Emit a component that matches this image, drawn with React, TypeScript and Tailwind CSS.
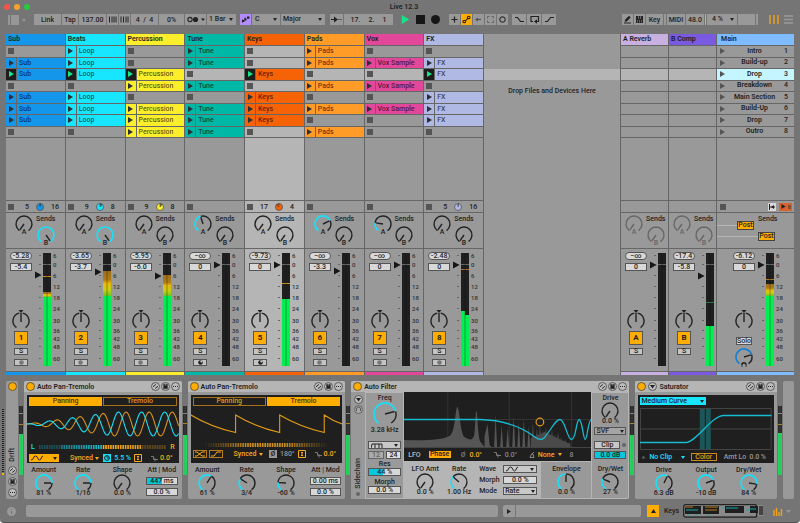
import React from "react";

type Clip = string | null;
type Track = {
  name: string;
  color: string;
  clips: Clip[];
  playing?: boolean;
  selected?: boolean;
  status?: [string, number, string];
  sendA: number;
  sendB: number;
  peak: string;
  vol: string;
  fader: number;
  meter: Level;
  midi?: boolean;
};
type Level = { green?: [number, number]; hot?: [number, number]; peak?: [number, string] };

const INK = "#1f1f1f";
const CYAN = "#18e0f8";

const fill = (name: string, mask: string): Clip[] => mask.split("").map((c) => (c === "x" ? name : null));

const tracks: Track[] = [
  { name: "Sub", color: "#1496ea", clips: fill("Sub", ".xx.xxx."), playing: true, status: ["5", 0.02, "16"], sendA: 0, sendB: 1, peak: "-5.28", vol: "-5.4", fader: 275, meter: { green: [297, 297], hot: [292, 297], peak: [276, "#c8871a"] } },
  { name: "Beats", color: "#18e6ff", clips: fill("Loop", "xxx.xxx."), playing: true, status: ["9", 0.12, "8"], sendA: 0, sendB: 1, peak: "-3.65", vol: "-3.7", fader: 272, meter: { green: [296, 296], hot: [271, 296] } },
  { name: "Percussion", color: "#fdee2c", clips: fill("Percussion", "..xx.xxx"), playing: true, status: ["9", 0.12, "8"], sendA: 0, sendB: 0, peak: "-5.95", vol: "-6.0", fader: 276, meter: { green: [296, 296], hot: [275, 296] } },
  { name: "Tune", color: "#00b8a6", clips: fill("Tune", "xx.x.xxx"), sendA: 0.44, sendB: 0, peak: "−∞", vol: "0", fader: 265, meter: {}, midi: true },
  { name: "Keys", color: "#f66206", clips: fill("Keys", "..x.xxx."), playing: true, selected: true, status: ["17", 0.85, "4"], sendA: 0, sendB: 0, peak: "-9.73", vol: "0", fader: 265, meter: { green: [299, 299], peak: [283, "#c8961a"] }, midi: true },
  { name: "Pads", color: "#ff9c28", clips: fill("Pads", "xx.x.x.x"), sendA: 0.72, sendB: 0, peak: "−∞", vol: "-3.3", fader: 271, meter: {} },
  { name: "Vox", color: "#e2479a", clips: fill("Vox Sample", ".x.x.x.."), sendA: 0.22, sendB: 0, peak: "−∞", vol: "0", fader: 265, meter: {} },
  { name: "FX", color: "#b0b9e4", clips: fill("FX", ".xx.xxx."), playing: true, status: ["5", 0.02, "16"], sendA: 0, sendB: 0, peak: "-2.48", vol: "0", fader: 265, meter: { green: [311, 315], peak: [269, "#b06a20"] } },
];

// Which tracks' clip in the "Drop" scene is currently sounding.
const scenes = ["Intro", "Build-up", "Drop", "Breakdown", "Main Section", "Build-Up", "Drop", "Outro"];
const LIVE_SCENE = 2;
const scale: [string, number][] = [["6", 256], ["0", 265], ["6", 276], ["12", 287], ["18", 298], ["24", 309], ["30", 321], ["36", 331], ["42", 339], ["48", 347], ["60", 359]];

const point = (cx: number, cy: number, r: number, deg: number): [number, number] => [
  cx + r * Math.sin((deg * Math.PI) / 180),
  cy - r * Math.cos((deg * Math.PI) / 180),
];
const arc = (c: number, r: number, a: number, b: number) => {
  const [x1, y1] = point(c, c, r, a);
  const [x2, y2] = point(c, c, r, b);
  return `M${x1} ${y1}A${r} ${r} 0 ${b - a > 180 ? 1 : 0} 1 ${x2} ${y2}`;
};

function Knob({ label, value = 0, color = CYAN, ink = "#222", size = 18, letter, head }: { label: string; value?: number; color?: string; ink?: string; size?: number; letter?: string; head?: boolean }) {
  const c = size / 2;
  const r = c - 1;
  const deg = -145 + 290 * value;
  const [x, y] = point(c, c, r * 0.9, deg);
  return (
    <span className="relative block shrink-0">
      <svg width={size} height={size} className="overflow-visible" fill="none" stroke={ink} strokeWidth="1.4">
        <path d={arc(c, r, deg, 145.1)} />
        {value > 0 && <path d={arc(c, r, -145, deg)} stroke={color} strokeWidth="1.7" />}
        <path d={`M${c} ${c}L${x} ${y}`} />
        {letter && (
          <text x={c} y={size + 1} textAnchor="middle" fontSize="7" fill={ink} stroke="none">
            {letter}
          </text>
        )}
        {head && <path d={`M${c - 2.2} ${size - 1}a2.200 2.200 0 1 1 4.400 0M${c - 2.5} ${size}h1M${c + 1.5} ${size}h1`} />}
      </svg>
      <input type="range" aria-label={label} min="0" max="1" step="any" defaultValue={value} className="absolute inset-0 h-full w-full opacity-0" />
    </span>
  );
}

function Pan({ label }: { label: string }) {
  return (
    <span className="relative block">
      <svg width="18" height="21" fill="none" stroke="#222" strokeWidth="1.4">
        <path d="M6.500 0h5L9 3z" fill="#222" stroke="none" />
        <path d={arc(9, 8, -145, -12)} transform="translate(0 2)" />
        <path d={arc(9, 8, 12, 145)} transform="translate(0 2)" />
        <path d="M9 3v9" />
      </svg>
      <input type="range" aria-label={label} className="absolute inset-0 h-full w-full opacity-0" />
    </span>
  );
}

function Meter({ id, level, fader, labels }: { id: string; level: Level; fader: number; labels?: boolean }) {
  const gid = `hot-${id}`;
  const w = labels ? 27 : 17;
  return (
    <span className="relative block shrink-0">
      <svg width={w} height="115" viewBox={`0 252 ${w} 115`} fontSize="6" fill="#333">
        <defs>
          <linearGradient id={gid} x1="0" x2="0" y1="0" y2="1">
            <stop offset="0" stopColor="#9c6e1c" />
            <stop offset="0.35" stopColor="#b07d14" />
            <stop offset="0.5" stopColor="#e8b80c" />
            <stop offset="0.75" stopColor="#c9cf10" />
            <stop offset="1" stopColor="#6cc324" />
          </linearGradient>
        </defs>
        {scale.map(([t, y], i) => (
          <g key={i}>
            <path d={`M4 ${y - 0.5}h2`} stroke="#666" />
            {labels && <text x="18" y={y + 2}>{t}</text>}
          </g>
        ))}
        <rect x="8" y="253" width="8" height="113" fill="#1f1f1f" />
        {level.hot && <rect x="8" y={level.hot[0]} width="8" height={level.hot[1] - level.hot[0]} fill={`url(#${gid})`} />}
        {level.green && (
          <>
            <rect x="8" y={level.green[0]} width="4" height={366 - level.green[0]} fill="#00ee50" />
            <rect x="12" y={level.green[1]} width="4" height={366 - level.green[1]} fill="#00ee50" />
          </>
        )}
        {level.peak && <rect x="8" y={level.peak[0]} width="8" height="1" fill={level.peak[1]} />}
        <path d="M8 264.500h8" stroke="#666" />
        <path d="M12 253v113" stroke="#111" strokeOpacity="0.35" />
        <path d={`M0 ${fader - 3.5}l6.500 3.500l-6.500 3.500z`} fill="#161616" />
      </svg>
      <input type="range" aria-label="Volume" className="absolute inset-0 h-full w-full opacity-0" />
    </span>
  );
}

function Mixer({ t, kind = "track", id }: { t: { peak: string; vol: string; fader: number; meter: Level; midi?: boolean; selected?: boolean }; kind?: "track" | "return" | "main"; id: string }) {
  return (
    <div className={`flex h-[122px] gap-[3px] pt-[3px] ${kind === "main" ? "pl-4" : "pl-1"} ${t.selected ? "bg-[#b5b5b5]" : "bg-[#999]"}`}>
      <div className="flex w-[22px] flex-col items-center">
        <button className="h-2 w-[22px] rounded-full border border-[#555] bg-[#d8d8d8] leading-[6px]">{t.peak}</button>
        <input aria-label={`Volume ${id}`} defaultValue={t.vol} className="mt-[3px] h-2 w-[22px] border border-[#555] bg-[#d8d8d8] text-center" />
        <div className="mt-auto" />
        <Pan label={`Pan ${id}`} />
        {kind === "main" ? (
          <>
            <button className="mt-[6px] h-2 w-4 border border-[#555] bg-[#d8d8d8] leading-[6px]">Solo</button>
            <div className="mt-[3px] mb-[5px]">
              <Knob label="Cue volume" value={0.75} color="#1a7fd0" head />
            </div>
          </>
        ) : (
          <>
            <button className="h-[14px] w-[14px] border border-[#555] bg-[#ffad00] text-[8px] leading-[12px] font-bold">{id}</button>
            <button className="mt-[3px] h-[7px] w-[14px] border border-[#555] bg-[#c4c4c4] leading-[5px]">S</button>
            {kind === "track" ? (
              <button aria-label="Arm" className="mt-1 mb-[5px] flex h-[7px] w-[14px] items-center justify-center border border-[#555] bg-[#c4c4c4]">
                <svg width="5" height="5"><circle cx="2.500" cy="2.500" r="2.300" fill={t.midi ? "#222" : "#777"} />{t.midi && <circle cx="3.300" cy="1.600" r="1" fill="#ccc" />}</svg>
              </button>
            ) : (
              <div className="h-4 shrink-0" />
            )}
          </>
        )}
      </div>
      <Meter id={id} level={t.meter} fader={t.fader} labels={kind !== "return"} />
    </div>
  );
}

function Sends({ a, b, ink, selected, pad = "pl-[9px]" }: { a: number; b: number; ink?: string; selected?: boolean; pad?: string }) {
  return (
    <div className={`flex h-[35px] gap-[3px] ${pad} ${selected ? "bg-[#b5b5b5]" : "bg-[#999]"}`}>
      <div className="pt-[2px]"><Knob label="Send A" value={a} ink={ink} letter="A" /></div>
      <div className="flex flex-col items-center pt-[2px]">
        <span>Sends</span>
        <div className="mt-[3px]"><Knob label="Send B" value={b} ink={ink} letter="B" /></div>
      </div>
    </div>
  );
}

const Tri = ({ color = "#222", w = 5, h = 6 }: { color?: string; w?: number; h?: number }) => (
  <svg width={w} height={h} viewBox="0 0 5 6" className="shrink-0"><path d="M0 0l5 3l-5 3z" fill={color} /></svg>
);
const Down = ({ color = "#222" }: { color?: string }) => (
  <svg width="4" height="3" className="shrink-0"><path d="M0 0h4l-2 3z" fill={color} /></svg>
);

function TrackColumn({ t, n }: { t: Track; n: number }) {
  const bg = t.selected ? "bg-[#b5b5b5]" : "bg-[#999]";
  return (
    <section className="flex min-w-0 flex-col gap-px">
      <h2 className="h-[11px] pl-[2px] leading-[11px] font-semibold" style={{ background: t.color }}>{t.name}</h2>
      <div className="grid h-[91px] grid-rows-8 gap-px">
        {t.clips.map((c, i) => {
          const live = t.playing && i === LIVE_SCENE;
          return c ? (
            <div key={i} className="flex min-h-0 gap-px">
              <button aria-label={`Launch ${c}`} className="flex w-[10px] items-center justify-center" style={{ background: live ? "#1c1c1c" : t.color }}>
                <Tri color={live ? "#1be58b" : "#2b3036"} />
              </button>
              <span className="flex-1 truncate pl-[2px] leading-[11px] text-black/65" style={{ background: t.color }}>{c}</span>
            </div>
          ) : (
            <div key={i} className={`flex min-h-0 items-center pl-[2px] ${i === LIVE_SCENE ? "bg-[#b5b5b5]" : bg}`}>
              <button aria-label="Stop" className="size-[6px] bg-[#555]" />
            </div>
          );
        })}
      </div>
      <div className={`min-h-4 flex-1 ${bg}`} />
      <div className={`flex h-[11px] items-center pl-[2px] ${bg}`}>
        <button aria-label="Stop track" className="size-[6px] bg-[#555]" />
        {t.status && (
          <>
            <span className="w-[15px] text-right">{t.status[0]}</span>
            <svg width="8" height="8" className="mx-[7px]">
              <circle cx="4" cy="4" r="3.500" fill={t.color} stroke="#555" strokeWidth="0.800" />
              <path d={`M4 4V.8A3.200 3.200 0 0 1 ${point(4, 4, 3.2, t.status[1] * 360).join(" ")}z`} fill="#333" fillOpacity={t.status[1] > 0.5 ? 0 : 0.5} stroke="#333" strokeWidth="0.500" />
            </svg>
            <span>{t.status[2]}</span>
          </>
        )}
      </div>
      <Sends a={t.sendA} b={t.sendB} selected={t.selected} />
      <Mixer t={t} id={String(n)} />
      <div className="h-[3px]" style={{ background: t.color }} />
    </section>
  );
}

function ReturnColumn({ name, id, color, t }: { name: string; id: string; color: string; t: { peak: string; vol: string; fader: number; meter: Level } }) {
  return (
    <section className="flex min-w-0 flex-col gap-px">
      <h2 className="h-[11px] pl-[2px] leading-[11px] font-semibold" style={{ background: color }}>{name}</h2>
      <div className="grid h-[91px] grid-rows-8 gap-px">
        {scenes.map((_, i) => <div key={i} className={i === LIVE_SCENE ? "bg-[#b5b5b5]" : "bg-[#999]"} />)}
      </div>
      <div className="min-h-4 flex-1 bg-[#999]" />
      <div className="h-[11px] bg-[#999]" />
      <Sends a={0} b={0} ink="#666" pad="pl-1" />
      <Mixer t={t} id={id} kind="return" />
      <div className="h-[3px]" style={{ background: color }} />
    </section>
  );
}

function MainColumn() {
  return (
    <section className="flex min-w-0 flex-col gap-px">
      <h2 className="h-[11px] bg-[#7ebcff] pl-1 leading-[11px] font-semibold">Main</h2>
      <div className="grid h-[91px] grid-rows-8 gap-px">
        {scenes.map((s, i) => (
          <button key={i} className={`flex min-h-0 items-center pr-[6px] pl-[3px] leading-[11px] ${i === LIVE_SCENE ? "bg-[#c5f6ff]" : "bg-[#999]"}`}>
            <Tri color="#555" />
            <span className="flex-1 text-center font-semibold">{s}</span>
            <span className="w-1 text-right">{i + 1}</span>
          </button>
        ))}
      </div>
      <div className="min-h-4 flex-1 bg-[#999]" />
      <div className="flex h-[11px] items-center bg-[#999] pr-[2px] pl-[3px]">
        <button aria-label="Stop all clips" className="size-[6px] bg-[#555]" />
        <button aria-label="Follow" className="ml-auto flex h-2 w-2 items-center justify-center bg-[#d8d8d8]"><svg width="6" height="6" stroke="#222" fill="#222"><path d="M.5 0v6M1 3h5" fill="none" /><path d="M2 3l3-2v4z" stroke="none" /></svg></button>
        <button aria-label="Back to arrangement" className="ml-[3px] flex h-2 w-[13px] items-center justify-center gap-[2px] bg-[#d9622f]"><Tri w={5} h={5} /><span className="h-1 w-[3px] bg-[#8d4a2d]" /></button>
      </div>
      <div className="flex h-[35px] flex-col gap-[2px] bg-[#999] pt-[2px]">
        <div className="flex items-start">
          <span className="mt-[10px] h-px w-5 bg-[#b5b5b5]" />
          <button className="mt-[6px] h-[9px] w-[17px] border border-[#444] bg-[#ffad00] leading-[7px]">Post</button>
          <span className="ml-1">Sends</span>
        </div>
        <div className="flex items-center">
          <span className="h-px w-[41px] bg-[#b5b5b5]" />
          <button className="h-[9px] w-[17px] border border-[#444] bg-[#ffad00] leading-[7px]">Post</button>
        </div>
      </div>
      <Mixer kind="main" id="M" t={{ peak: "-6.12", vol: "0", fader: 265, meter: { green: [296, 296], hot: [284, 296], peak: [279, "#a8781c"] } }} />
      <div className="h-[3px] bg-[#7ebcff]" />
    </section>
  );
}

function Tool({ children, w, cls = "bg-[#999]", label }: { children?: React.ReactNode; w: string; cls?: string; label?: string }) {
  return <button aria-label={label} className={`flex h-[11px] shrink-0 items-center justify-center whitespace-nowrap ${w} ${cls}`}>{children}</button>;
}
function ToolSelect({ label, value, w, pad = "pl-[2px]" }: { label: string; value: string; w: string; pad?: string }) {
  return (
    <span className={`relative flex h-[11px] shrink-0 items-center ${w}`}>
      <select aria-label={label} className={`h-full w-full appearance-none bg-[#999] leading-[11px] ${pad}`}><option>{value}</option></select>
      <span className="pointer-events-none absolute right-[3px]"><Down /></span>
    </span>
  );
}
const Icon = ({ d, w = 9, color = "#222", sw = 1.2, fillD }: { d?: string; w?: number; color?: string; sw?: number; fillD?: string }) => (
  <svg width={w} height="9" viewBox={`0 0 ${w} 9`} fill="none" stroke={color} strokeWidth={sw}>
    {d && <path d={d} />}
    {fillD && <path d={fillD} fill={color} stroke="none" />}
  </svg>
);

function Toolbar() {
  return (
    <nav className="flex h-[11px] items-center pr-[7px] pl-2">
      <svg width="18" height="10"><path d="M0 0h2v10h-2zM3 0h8v10h-8z" fill="#969696" /><path d="M14 4h4l-2 3z" fill="#969696" /></svg>
      <div className="ml-2 flex gap-px">
        <Tool w="w-[27px]">Link</Tool>
        <Tool w="w-4">Tap</Tool>
        <Tool w="w-[27px]">137.00</Tool>
        <Tool w="w-[11px]" label="Nudge down"><Icon d="M1.500 1.500v6M4 1.500v6M6 1.500v6M8 1.500v6" sw={1} /></Tool>
        <Tool w="w-[11px]" label="Nudge up"><Icon d="M1 1.500v6M3.500 1.500v6M6 1.500v6M8 1.500v6" sw={1} /></Tool>
        <Tool w="w-[27px]">4&nbsp; /&nbsp; 4</Tool>
        <Tool w="w-[25px]">0%</Tool>
        <Tool w="w-[21px]" label="Metronome"><svg width="18" height="7"><circle cx="3" cy="3.500" r="2.100" fill="none" stroke="#222" strokeWidth="1.100" /><circle cx="8.500" cy="3.500" r="2.600" fill="#222" /><path d="M14 2.500h4l-2 2.500z" fill="#222" /></svg></Tool>
        <ToolSelect label="Quantization" value="1 Bar" w="w-[29px]" />
      </div>
      <div className="ml-1 flex gap-px">
        <Tool w="w-[11px]" cls="bg-[#b38cff]" label="Scale"><Icon d="M1.500 7.500V4.500M4 5V2.500M7 2v2" sw={1} fillD="M1 5h2.500v2h-2.500zM3.500 3.500h2v2h-2zM6 1.500h2.500v2h-2.500z" /></Tool>
        <ToolSelect label="Root note" value="C" w="w-[28px]" pad="pl-[3px]" />
        <ToolSelect label="Scale name" value="Major" w="w-[44px]" />
      </div>
      <div className="ml-[5px] flex gap-px">
        <Tool w="w-[13px]" label="Follow"><Icon w={11} d="M0 4.500h4M7.500 4.500h1M9.500 4.500h1" fillD="M3 1.500l4 3l-4 3z" /></Tool>
        <Tool w="w-[49px]"><span className="flex gap-2"><span>17.</span><span>2.</span><span>1</span></span></Tool>
      </div>
      <div className="ml-2 flex items-center gap-[6px]">
        <button aria-label="Play"><Tri color="#17e38a" w={9} h={9} /></button>
        <button aria-label="Stop" className="size-[9px] bg-[#161616]" />
        <button aria-label="Record" className="size-[9px] rounded-full bg-[#161616]" />
      </div>
      <div className="ml-[9px] flex gap-px">
        <Tool w="w-[11px]" label="Overdub"><Icon d="M4.500 1.500v6M1.500 4.500h6" /></Tool>
        <Tool w="w-[11px]" cls="bg-[#ffad00]" label="Automation arm"><Icon d="M3.500 6L5.500 3.500M1 6.500a1.300 1.300 0 1 0 2.600 0a1.300 1.300 0 1 0-2.600 0M5.400 2.500a1.300 1.300 0 1 0 2.600 0a1.300 1.300 0 1 0-2.600 0" sw={1.1} /></Tool>
        <Tool w="w-[11px]" label="Re-enable automation"><Icon d="M3 4.500h4" fillD="M1 4.500l3-2v4z" color="#555" /></Tool>
        <Tool w="w-[11px]" label="Capture"><Icon d="M1.500 3.500v-2h2M5.500 1.500h2v2M7.500 5.500v2h-2M3.500 7.500h-2v-2" color="#666" sw={1} /></Tool>
        <Tool w="w-[11px]" label="Session record"><Icon d="M1.800 4.500a2.700 2.700 0 1 0 5.400 0a2.700 2.700 0 1 0-5.400 0" color="#333" /></Tool>
      </div>
      <div className="ml-1 flex gap-px">
        <Tool w="w-[14px]" label="Punch in"><Icon w={11} d="M1 2.500h2.500l3 4h3.500" /></Tool>
        <Tool w="w-[14px]" label="Loop"><Icon w={11} d="M4 6.500H2v-5h7.500v5H8" fillD="M8 4.300v4.400l-3-2.200z" /></Tool>
        <Tool w="w-[14px]" label="Punch out"><Icon w={11} d="M1 6.500h2.500l3-4h3.500" /></Tool>
      </div>
      <div className="ml-auto flex gap-px">
        <Tool w="w-[11px]" label="Draw mode"><Icon d="M1 8h7" sw={1} fillD="M1.500 7l.8-2.500L6 .8l1.700 1.700L4 6.200z" /></Tool>
        <Tool w="w-[11px]" label="Computer keyboard">
          <svg width="9" height="9"><path d="M1 1h7v7h-7z" fill="#222" /><path d="M2.500 5v2.500M4.500 5v2.500M6.500 5v2.500M3.500 1v3M5.500 1v3" stroke="#999" strokeWidth=".6" /></svg>
        </Tool>
        <Tool w="w-[17px]">Key</Tool>
        <Tool w="w-[2px]" label="Key activity" />
        <Tool w="w-[18px]">MIDI</Tool>
        <Tool w="w-[18px]">48.0</Tool>
        <span className="h-[11px] w-px bg-[#ffad00]" />
        <ToolSelect label="CPU" value="4 %" w="w-[30px]" pad="pl-[5px]" />
        <Tool w="w-[17px]" label="Overload" />
        <Tool w="w-[2px]" label="Disk" />
      </div>
      <svg width="24" height="9" className="ml-[11px]"><path d="M1 0v9M5 0v9M9 0v9" stroke="#f2a21c" strokeWidth="1.400" /><path d="M15 1h9M15 4.500h9M15 8h9" stroke="#999" strokeWidth="1.400" /></svg>
    </nav>
  );
}

const Dot = () => <span className="size-[9px] shrink-0 rounded-full border border-[#6b5a30] bg-[#ffad00]" />;
function MiniIcons({ col }: { col?: boolean }) {
  return (
    <span className={`flex ${col ? "flex-col gap-[2px]" : "ml-auto gap-px"}`}>
      {[
        <path key="a" d="M2.600 5V4L5 2.500M6.400 4v1L4 6.500" strokeWidth="0.900" />,
        <path key="b" d="M2.500 2.300h4v4.400h-4z M3.700 2.300v1.300h1.600v-1.300z" fill="#222" fillRule="evenodd" strokeWidth="0.300" />,
        <path key="c" d="M2 4.500h1M4 4.500h1M6 4.500h1" />,
      ].map((p, i) => (
        <button key={i} aria-label={["Hot-swap", "Save preset", "More"][i]}>
          <svg width="9" height="9" fill="none" stroke="#222" strokeWidth="1"><circle cx="4.500" cy="4.500" r="4" fill="#bdbdbd" stroke="#444" strokeWidth="0.800" />{p}</svg>
        </button>
      ))}
    </span>
  );
}

const Fold = () => (
  <svg width="9" height="9" className="shrink-0"><circle cx="4.500" cy="4.500" r="4" fill="#bdbdbd" stroke="#444" strokeWidth=".8" /><path d="M2 3h5l-2.500 3.500z" fill="#222" /></svg>
);

function Device({ title, children, grow, extra }: { title: string; children: React.ReactNode; grow: string; extra?: React.ReactNode }) {
  return (
    <article className={`flex min-w-0 flex-col rounded-[2px] bg-[#999] ${grow}`}>
      <header className="flex h-[11px] shrink-0 items-center gap-[2px] rounded-t-[2px] bg-[#b5b5b5] px-[2px]">
        <Dot />{extra}<h3 className="font-semibold">{title}</h3><MiniIcons />
      </header>
      {children}
    </article>
  );
}

function DeviceMeter({ top = 28, peak = 18 }: { top?: number; peak?: number }) {
  return (
    <svg width="4" height="69" className="mt-[25px] shrink-0">
      <rect width="4" height="69" fill="#2a2a2a" />
      <path d="M0 7.500h4" stroke="#888" />
      <path d={`M0 ${peak + 0.5}h4`} stroke="#a8862a" />
      <rect y={top} width="4" height={69 - top} fill="#22d65c" />
      <path d="M2 0v69" stroke="#777" strokeOpacity="0.500" strokeWidth="0.600" />
    </svg>
  );
}

function LabeledKnob({ label, text, value, size = 18 }: { label: string; text: string; value: number; size?: number }) {
  return (
    <div className="flex flex-col items-center whitespace-nowrap">
      <span>{label}</span>
      <div className={size > 18 ? "" : "-mb-[3px]"}><Knob label={label} value={value} size={size} /></div>
      <span>{text}</span>
    </div>
  );
}

function Field({ label, value, part = "" }: { label: string; value: string; part?: string }) {
  return (
    <span className="relative block h-2 border border-[#555] bg-[#d8d8d8]">
      {part && <span className={`absolute inset-y-0 left-0 bg-[#06c6dd] ${part}`} />}
      <input aria-label={label} defaultValue={value} className="relative block h-[6px] w-full bg-transparent text-center leading-[6px]" />
    </span>
  );
}

function Drop({ label, value, cls = "border border-[#555] bg-[#c8c8c8]" }: { label: string; value: string; cls?: string }) {
  return (
    <span className="relative flex h-2 items-center">
      <select aria-label={label} className={`h-full w-full appearance-none pl-[1px] leading-[6px] ${cls}`}><option>{value}</option></select>
      <span className="pointer-events-none absolute right-[2px]"><Down /></span>
    </span>
  );
}

const Sine = () => <svg width="12" height="6" fill="none" stroke="#222"><path d="M0 5C3 5 2 1 4.500 1S6.500 5 8.500 5S10 1 12 1" /></svg>;

const wave = (peakX: number) => {
  let d = "";
  for (let x = 0; x <= 153; x += 1) {
    const amp = 12 * Math.min(1, x / 87);
    d += `${x ? "L" : "M"}${x} ${(15 - amp * Math.cos((2 * Math.PI * (x - peakX)) / 23.3)).toFixed(2)}`;
  }
  return d;
};

function Ladder({ mono }: { mono?: boolean }) {
  const n = 52;
  return (
    <svg viewBox="0 0 132 4" preserveAspectRatio="none" className="h-1 w-full flex-1">
      {Array.from({ length: n }, (_, i) => {
        const half = i < n / 2;
        const u = i / (n - 1);
        const o = mono ? Math.max(0, Math.min(0.8, 1.1 - Math.abs(u - 0.5) * 2.2)) : half ? (u < 0.16 ? 0.25 : 0.3 + u) : u < 0.82 ? 1 - (u - 0.5) * 0.4 : 0.3;
        return <rect key={i} x={i * 2.54} width="1.700" height="4" fill={half && !mono ? CYAN : "#f9ab1c"} opacity={o} />;
      })}
    </svg>
  );
}

function Tabs({ active }: { active: number }) {
  return (
    <div role="tablist" className="grid grid-cols-2 gap-px px-[2px]">
      {["Panning", "Tremolo"].map((n, i) => (
        <button key={n} role="tab" aria-selected={i === active} className={`h-[9px] border leading-[7px] ${i === active ? "border-[#ffad00] bg-[#ffad00] text-[#4a3408]" : "border-[#a8721a] text-[#e09a18]"}`}>{n}</button>
      ))}
    </div>
  );
}

const UpDown = () => <svg width="8" height="8" fill="none" stroke="#f9ab1c"><path d="M.5.5h7v7h-7zM4 2v4M3 2.500h2M3 5.500h2" /></svg>;
const Phase = ({ color = "#777" }: { color?: string }) => <svg width="7" height="7" fill="none" stroke={color}><path d="M0 1.500h2.500v3H7M4 3v3.500" /></svg>;

function AutoPan({ second }: { second?: boolean }) {
  const amber = "text-[#f9ab1c]";
  return (
    <Device title="Auto Pan-Tremolo" grow="flex-[158_158_0px]">
      <div className="mx-[3px] mt-[3px] flex h-[68px] flex-col bg-[#1f1f1f] pt-[2px]">
        <Tabs active={second ? 1 : 0} />
        <svg viewBox="0 0 153 30" preserveAspectRatio="none" className="mt-[3px] h-[30px] w-full" fill="none" strokeWidth="1.100">
          {second ? (
            <path d="M0 6Q20 18 45 23.500V6Q65 18 89.500 23.500V6Q110 18 134.500 23.500V6Q143 12 153 15" stroke="#e09a18" />
          ) : (
            <><path d={wave(100)} stroke="#d8921c" /><path d={wave(92.3)} stroke={CYAN} /></>
          )}
        </svg>
        <div className="mt-1 flex items-center gap-1 px-1">
          {second ? <span className="w-1" /> : <span className="text-[#18e0f8]">L</span>}
          <Ladder mono={second} />
          {second ? <span className="w-1" /> : <span className={amber}>R</span>}
        </div>
        <div className={`mt-[3px] flex items-center px-[2px] ${amber}`}>
          {second ? (
            <span className="flex gap-[2px]">
              <button aria-label="Invert" className="h-2 w-[14px] border border-[#b87c1a]"><svg width="12" height="6" fill="none" stroke="#f9ab1c"><path d="M1 1h2l5 4h3M1 5h2l5-4h3" /></svg></button>
              <button aria-label="Shape" className="h-2 w-[14px] border border-[#b87c1a]"><svg width="12" height="6" fill="none" stroke="#f9ab1c"><path d="M1 5h3l3-4h4" /></svg></button>
            </span>
          ) : (
            <button aria-label="Waveform" className="flex h-2 w-[30px] items-center justify-between bg-[#ffad00] px-[2px]"><Sine /><Down /></button>
          )}
          <button className="ml-[11px] flex items-center gap-[2px]">Synced<Down color="#f9ab1c" /></button>
          <span className="ml-auto flex items-center gap-[3px]">
            {second ? <span className="size-2 bg-[#999] text-center text-[#1f1f1f]">Ø</span> : <svg width="8" height="8"><path d="M0 0h8v8h-8z" fill={CYAN} /><circle cx="4" cy="4" r="2.400" fill="none" stroke="#1f1f1f" /><path d="M4 2v2h2" fill="none" stroke="#1f1f1f" strokeWidth=".8" /></svg>}
            <span className={second ? "text-[#999]" : "text-[#18e0f8]"}>{second ? "180°" : "5.5 %"}</span>
            <UpDown />
          </span>
          <span className="mr-1 ml-[9px] flex items-center gap-[2px]"><Phase />0.0°</span>
        </div>
      </div>
      <div className="grid grid-cols-4 pt-[3px]">
        <LabeledKnob label="Amount" text={second ? "61 %" : "81 %"} value={second ? 0.61 : 0.81} />
        <LabeledKnob label="Rate" text={second ? "3/4" : "1/16"} value={second ? 0.3 : 0.81} />
        <LabeledKnob label="Shape" text={second ? "-60 %" : "0.0 %"} value={second ? 0.2 : 0} />
        <div className="flex flex-col gap-[3px] pr-1 pl-1 text-center whitespace-nowrap">
          <span className="-mx-1">Att | Mod</span>
          <Field label="Attack" value={second ? "0.00 ms" : "447 ms"} part={second ? "" : "w-1/2"} />
          <Field label="Modulation" value="0.0 %" />
        </div>
      </div>
    </Device>
  );
}

function FilterDisplay() {
  const spikes: [number, number][] = [[91, 22], [97, 33], [103, 36], [109, 24], [114, 30], [119, 27], [124, 34], [128, 31], [132, 36], [135, 33], [138, 38], [141, 34], [144, 40], [147, 37], [150, 42], [153, 40], [156, 45], [160, 47], [164, 50]];
  return (
    <svg viewBox="0 0 186 56" preserveAspectRatio="none" className="h-[56px] w-full" fill="none">
      <path d="M43.500 0v56M104.500 0v56M166.500 0v56M0 27.500h186" stroke="#333" />
      <path d="M0 55V48C20 49 38 48 45 44C51 42 51 15 53 15S56 42 60 45C66 49 69 48 70 42C71 34 71 19 72 19S73 44 76 50L80 55V44L83 32L85 53L87 55z" fill="#555" />
      {spikes.map(([x, y]) => <path key={x} d={`M${x - 1.5} 55L${x} ${y}L${x + 1.5} 55z`} fill="#555" />)}
      <path d="M126 55V46L140 40L150 45L165 52V55z" fill="#4a4a4a" />
      <path d="M0 55.500h186" stroke="#444" />
      <path d="M0 27.500H75C100 28 118 36 130 45C134 48 137 48 139 46C147 37 150 27.500 155 27.500S162 47.500 166.500 47.500S171 27.500 174 27.500S178 47.500 180 47.500S183 27.500 186 27.500" stroke="#16bcd2" strokeWidth="1.300" />
      <circle cx="135" cy="30" r="3.800" stroke="#e09a18" strokeWidth="1.200" />
    </svg>
  );
}

function AutoFilter() {
  return (
    <Device title="Auto Filter" grow="flex-[279_279_0px]">
      <div className="flex flex-1 rounded-b-[2px] bg-[#b5b5b5]">
        <div className="flex w-[14px] flex-col items-center gap-px bg-[#999] py-[3px]">
          <Fold />
          <svg width="9" height="9" fill="none" stroke="#555"><circle cx="4.500" cy="4.500" r="4" fill="#aaa" strokeWidth=".8" /><path d="M2.500 6V4a2 2 0 0 1 4 0v2" /></svg>
          <span className="mt-auto rotate-180 [writing-mode:vertical-rl]">Sidechain</span>
          <span className="mt-[2px] size-1 rounded-full bg-[#666]" />
        </div>
        <div className="m-px flex w-[37px] flex-col bg-[#999] px-[2px] pt-px">
          <LabeledKnob label="Freq" text="3.28 kHz" value={0.76} size={24} />
          <div className="mt-[7px] grid gap-[2px]">
            <button aria-label="Filter type" className="flex h-2 items-center justify-between border border-[#555] bg-[#c8c8c8] px-[2px]"><svg width="12" height="5" fill="none" stroke="#222"><path d="M0 5L1 1h3v4M4 1h4v4M8 1h3v4" /></svg><Down /></button>
            <div className="grid grid-cols-2 gap-[2px]">
              <button className="h-2 border border-[#666] bg-[#aaa] leading-[6px] text-[#666]">12</button>
              <button className="h-2 border border-[#555] bg-[#ddd] leading-[6px]">24</button>
            </div>
          </div>
          <span className="mt-px text-center">Res</span>
          <Field label="Resonance" value="44 %" part="w-[44%]" />
          <span className="mt-[2px] text-center">Morph</span>
          <Field label="Filter morph" value="0.0 %" />
        </div>
        <div className="flex min-w-0 flex-1 flex-col">
          <div className="bg-[#1f1f1f]">
            <FilterDisplay />
            <div className="flex h-[13px] items-center px-1 text-[#bbb]">
              <span>LFO</span>
              <button className="ml-2 h-[7px] w-[22px] bg-[#ffad00] leading-[7px] text-[#1f1f1f]">Phase</button>
              <span className="ml-[10px] text-[#777]">Ø</span>
              <span className="ml-1 text-[#f9ab1c]">0.0°</span>
              <span className="mx-auto flex items-center gap-1 text-[#888]"><Phase />0.0°</span>
              <span className="mr-[14px] flex items-center gap-[3px] text-[#888]">
                <svg width="6" height="6" fill="none" stroke="#888"><path d="M1 5.500h4L4 2H2.500zM3 2l2-2" /></svg>
                <button className="flex items-center gap-1 text-[#f9ab1c]">None<Down color="#f9ab1c" /></button>
                <span className="ml-1">8</span>
              </span>
            </div>
          </div>
          <div className="flex flex-1 pt-px">
            <div className="grid w-[72px] grid-cols-2 pt-[3px] pl-1">
              <LabeledKnob label="LFO Amt" text="0.0 %" value={0} />
              <LabeledKnob label="Rate" text="1.00 Hz" value={0.33} />
            </div>
            <div className="grid flex-1 auto-rows-[8px] grid-cols-[24px_1fr] gap-y-[3px] pt-[3px] pr-1 pl-[3px]">
              <span>Wave</span>
              <button aria-label="LFO wave" className="flex items-center justify-between border border-[#555] bg-[#c8c8c8] px-[2px]"><Sine /><Down /></button>
              <span>Morph</span>
              <Field label="LFO morph" value="0.0 %" />
              <span>Mode</span>
              <Drop label="Mode" value="Rate" />
            </div>
            <div className="mb-px w-[50px] bg-[#999] pt-[3px]"><LabeledKnob label="Envelope" text="0.0 %" value={0.5} /></div>
          </div>
        </div>
        <div className="m-px flex w-[36px] flex-col bg-[#999] px-[2px] pt-px">
          <LabeledKnob label="Drive" text="0.0 %" value={0} />
          <div className="mt-[2px]"><Drop label="Filter circuit" value="SVF" cls="border border-[#555] bg-[#a4a4a4]" /></div>
          <div className="mt-[6px] flex items-center gap-[2px]">
            <button className="h-2 flex-1 border border-[#555] bg-[#c8c8c8] leading-[6px]">Clip</button>
            <span className="size-1 rounded-full bg-[#666]" />
          </div>
          <input aria-label="Output gain" defaultValue="0.0 dB" className="mt-[2px] h-2 w-full border border-[#555] bg-[#06c6dd] text-center leading-[6px]" />
          <div className="mt-[6px]"><LabeledKnob label="Dry/Wet" text="27 %" value={0.27} /></div>
        </div>
      </div>
    </Device>
  );
}

function Saturator() {
  return (
    <Device title="Saturator" grow="flex-[142_142_0px]" extra={<Fold />}>
      <div className="mx-[3px] mt-[3px] flex h-[68px] flex-col bg-[#1f1f1f] px-[2px] pt-[2px]">
        <div className="w-[66px]"><Drop label="Curve" value="Medium Curve" cls="bg-[#18e6ff]" /></div>
        <svg viewBox="0 0 132 42" preserveAspectRatio="none" className="mt-[3px] h-[42px] w-full" fill="none">
          <path d="M.5.5h131v41h-131zM0 21h132" stroke="#444" />
          <path d="M60 1h5v40h-5zM66 1h5v40h-5z" fill="#1d5658" />
          <path d="M0 34.500H46C56 34.500 72 7.500 84 7.500H132" stroke="#16bcd2" strokeWidth="1.300" />
        </svg>
        <div className="mt-[3px] flex items-center px-[2px]">
          <span className="size-[3px] rounded-full bg-[#555]" />
          <button className="ml-1 flex items-center gap-[9px] text-[#18e0f8]">No Clip<Down color={CYAN} /></button>
          <button className="ml-auto h-2 w-[26px] border border-[#c8871a] leading-[6px] text-[#e09a18]">Color</button>
          <span className="mr-1 ml-[7px] flex gap-[3px] text-[#999]"><span>Amt Lo</span><span>0.0 %</span></span>
        </div>
      </div>
      <div className="grid grid-cols-3 px-[7px] pt-[3px]">
        <LabeledKnob label="Drive" text="6.3 dB" value={0.59} />
        <LabeledKnob label="Output" text="-10 dB" value={0.74} />
        <LabeledKnob label="Dry/Wet" text="84 %" value={0.84} />
      </div>
    </Device>
  );
}

export default function App() {
  return (
    <main className="flex min-h-screen flex-col overflow-hidden rounded-b-[4px] border-b border-[#555] bg-[#757575] font-['Roboto','Liberation_Sans',sans-serif] text-[7px] leading-[8px] font-medium text-[#1f1f1f]">
      <header className="grid h-[14px] grid-cols-3 items-center px-1">
        <div className="flex gap-1">
          <button aria-label="Close" className="size-[6px] rounded-full bg-[#f2564a]" />
          <button aria-label="Minimize" className="size-[6px] rounded-full bg-[#f9a12c]" />
          <button aria-label="Zoom" className="size-[6px] rounded-full bg-[#28c840]" />
        </div>
        <h1 className="pl-2 text-center font-semibold">Live 12.3</h1>
      </header>
      <Toolbar />
      <div className="mx-[6px] mt-[9px] grid flex-1 grid-cols-[repeat(8,minmax(0,470fr))_minmax(0,1088fr)_minmax(0,376fr)_minmax(0,376fr)_minmax(0,616fr)] gap-px bg-[#666]">
        {tracks.map((t, i) => <TrackColumn key={t.name} t={t} n={i + 1} />)}
        <section className="flex flex-col bg-[#999]">
          <div className="mt-[35px] h-[11px] bg-[#b5b5b5]" />
          <p className="mt-[7px] text-center">Drop Files and Devices Here</p>
        </section>
        <ReturnColumn name="A Reverb" id="A" color="#c8b0e0" t={{ peak: "−∞", vol: "0", fader: 265, meter: {} }} />
        <ReturnColumn name="B Comp" id="B" color="#7a5ae0" t={{ peak: "-17.4", vol: "-5.8", fader: 276, meter: { green: [326, 326], peak: [302, "#1f7a48"] } }} />
        <MainColumn />
      </div>
      <div className="mt-[6px] mr-[6px] flex h-[118px] gap-px">
        <svg width="5" height="118" className="shrink-0"><path d="M3 28v66" stroke="#222" strokeWidth="2" strokeDasharray="1 1" /><path d="M2 92h2v2h-2z" fill="#ffad00" /></svg>
        <article className="flex w-3 flex-col items-center rounded-[2px] bg-[#999] pt-px pb-[2px]">
          <Dot />
          <h3 className="mt-auto mb-1 rotate-180 [writing-mode:vertical-rl]">Drift</h3>
          <MiniIcons col />
        </article>
        <DeviceMeter />
        <AutoPan />
        <DeviceMeter top={29} peak={17} />
        <AutoPan second />
        <DeviceMeter top={29} peak={17} />
        <AutoFilter />
        <DeviceMeter top={29} peak={17} />
        <Saturator />
        <DeviceMeter top={27} peak={18} />
        <div className="w-[11px] rounded-[2px] bg-[#999]" />
      </div>
      <footer className="mt-[6px] mb-[5px] flex h-3 items-center px-[7px]">
        <svg width="9" height="9"><circle cx="4.500" cy="4.500" r="4.500" fill="#999" /><path d="M4.500 2v1M4.500 4v3" stroke="#757575" strokeWidth="1.200" /></svg>
        <div className="ml-[10px] h-3 flex-[472] rounded-[2px] bg-[#999]" />
        <button aria-label="Preview" className="ml-[5px] flex h-3 w-3 items-center justify-center rounded-l-[2px] bg-[#999]"><Tri w={4} h={5} /></button>
        <div className="ml-px h-3 flex-[125] rounded-r-[2px] bg-[#999]" />
        <button aria-label="Show detail" className="ml-[6px] flex h-3 w-3 items-center justify-center bg-[#ffad00]"><svg width="5" height="4"><path d="M0 4h5l-2.500-4z" fill={INK} /></svg></button>
        <span className="ml-[5px] w-[15px]">Keys</span>
        <svg width="81" height="14" className="ml-1">
          <rect x="1" y="1" width="79" height="11" fill="#8a8a8a" />
          <path d="M2 2h16v8h-16zM20 2h16v8h-16zM42 2h19v7h-19zM67 2h8v7h-8z" fill="#1f1f1f" />
          <path d="M2 3h8M22 3h13M22 6h12" stroke="#b87c1a" />
          <path d="M3 6h12M43 4h12M67 5h6M39 4h2M63 6h3M4 11h2M12 11h2M24 11h2" stroke="#1aa" />
          <path d="M76 2h4v9h-4z" fill="#444" />
          <rect x=".7" y=".7" width="73" height="12.500" rx="2" fill="none" stroke="#222" strokeWidth="1.300" />
        </svg>
        <svg width="20" height="9" className="ml-[9px]"><path d="M1 3v6M3.500 1v8M6 5v4M8.500 2v7" stroke="#f2a21c" strokeWidth="1.400" /><path d="M13 3h5l-2.500 3z" fill="#999" /></svg>
      </footer>
    </main>
  );
}
